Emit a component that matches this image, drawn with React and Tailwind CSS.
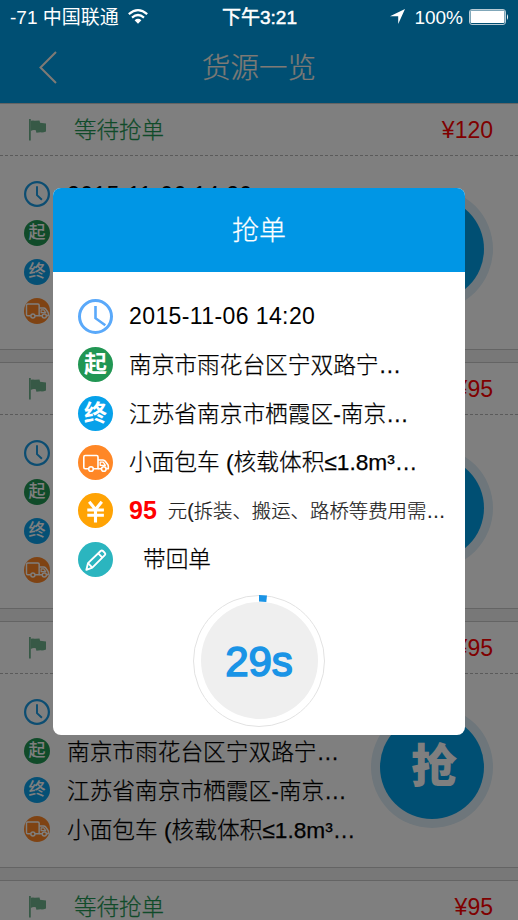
const orders = [
  { id: 1, price: 120 },
  { id: 2, price: 95 },
  { id: 3, price: 95 },
  { id: 4, price: 95 },
];

function ClockIcon({ className, long }) {
  return (
    <svg viewBox="0 0 35 35" fill="none" stroke="currentColor" className={className}>
      <circle cx="17.5" cy="17.5" r="16" strokeWidth="3" />
      <path d={long ? "M17.5 7v12.2l9.8 7" : "M17.5 7v12l6.6 6.2"} strokeWidth="2.6" />
    </svg>
  );
}

function TruckIcon({ className, large }) {
  return (
    <svg viewBox="0 0 35 35" fill="none" stroke="#fff" strokeWidth="1.6" strokeLinejoin="round" className={className}>
      <circle cx="17.5" cy="17.5" r="17.5" fill="#ff8726" stroke="none" />
      <g transform={large ? "translate(-3.6 -4.6) scale(1.2)" : undefined}>
        <path d="M10.6 23.7H7.2Q5.8 23.7 5.8 22.3V11.9Q5.8 10.5 7.2 10.5H18.6Q20 10.5 20 11.9V23.7H15.4" />
        <path d="M20 15h5q1.4 0 2.3 1.2l2.4 3.3q.6.8.6 1.7v2.5h-2M23.5 23.7H20" />
        <path d="M22.2 17.2h3l2.2 3.1h-5.2z" strokeWidth="1.3" />
        <circle cx="13" cy="24" r="2.3" />
        <circle cx="25.8" cy="24" r="2.3" />
      </g>
    </svg>
  );
}

function YuanIcon({ className }) {
  return (
    <svg viewBox="0 0 35 35" fill="none" stroke="#fff" className={className}>
      <circle cx="17.5" cy="17.5" r="17.5" fill="#ffa304" stroke="none" />
      <path d="M11.2 8.8l6.3 7.6 6.3-7.6M17.5 16v13.4M9.3 17h16.6M9.3 22.2h16.6" strokeWidth="3.1" />
    </svg>
  );
}

function PencilIcon({ className }) {
  return (
    <svg viewBox="0 0 35 35" fill="none" stroke="#fff" strokeWidth="1.9" strokeLinejoin="round" className={className}>
      <circle cx="17.5" cy="17.5" r="17.5" fill="#2bb5bf" stroke="none" />
      <path d="M8.4 27.8l1.6-6.7L22.6 9q1.2-1 2.4 0l1.8 1.8q1.1 1.2 0 2.4L14.3 25.6z" />
      <path d="M20.2 11.4l4.2 4.2M10 21.1l4.3 4.5" />
    </svg>
  );
}

function FlagIcon() {
  return (
    <svg viewBox="0 0 18 22" className="h-[22px] w-[18px] text-[#6fb38d]" fill="currentColor">
      <path d="M1 0h1.8v21.5H1z" />
      <path d="M2.8 1.8q2-.8 4 0l4.7-.3.6 2.3 5.9.6v8q-3 1.4-5.4.9l-4.2.4-.6-2.4q-2.6-.6-5 .6z" />
    </svg>
  );
}

function OrderCard({ order }) {
  return (
    <section className="mb-3 h-[247px] shrink-0 border-y border-[#c8c8c8] bg-white">
      <div className="flex h-[52px] items-center border-b border-dashed border-[#b4b4b4] pr-[25px] pl-[28px]">
        <FlagIcon />
        <span className="ml-7 flex-1 pt-[3px] text-[22.5px] font-light text-[#219653] [-webkit-text-stroke:0.25px_#219653]">等待抢单</span>
        <span className="pt-[2px] text-[23px] text-[#ff0000]">¥{order.price}</span>
      </div>
      <div className="flex justify-between pr-[25px] pl-6">
        <ul className="pt-[18px] text-[22.7px] font-light whitespace-nowrap text-black">
          <li className="flex h-[39.2px] items-center gap-[17px]">
            <ClockIcon className="size-[26px] text-[#199be4]" />
            <span className="pt-[3px] text-[23px] tracking-[0.35px]">2015-11-06 14:20</span>
          </li>
          <li className="flex h-[39.2px] items-center gap-[17px]">
            <span className="flex size-[26px] items-center justify-center rounded-full bg-[#219653] text-[17px] font-medium text-white">起</span>
            <span className="pt-[3px] [-webkit-text-stroke:0.25px_black]">南京市雨花台区宁双路宁…</span>
          </li>
          <li className="flex h-[39.2px] items-center gap-[17px]">
            <span className="flex size-[26px] items-center justify-center rounded-full bg-[#0ba0ea] text-[17px] font-medium text-white">终</span>
            <span className="pt-[3px] [-webkit-text-stroke:0.25px_black]">江苏省南京市栖霞区-南京…</span>
          </li>
          <li className="flex h-[39.2px] items-center gap-[17px]">
            <TruckIcon large className="size-[26px]" />
            <span className="pt-[3px] [-webkit-text-stroke:0.25px_black]">小面包车 (核载体积≤1.8m³…</span>
          </li>
        </ul>
        <button className="mt-[32px] -ml-10 flex size-[122px] shrink-0 items-center justify-center rounded-full bg-[#dcecf6]">
          <span className="flex size-[104px] items-center justify-center rounded-full bg-[#009ee6] pb-[2px] pl-1 text-[46px] font-black text-white">抢</span>
        </button>
      </div>
    </section>
  );
}

function StatusBar() {
  return (
    <div className="absolute inset-x-0 top-0 z-20 grid h-[33px] grid-cols-3 items-center pr-[9px] pl-[10px] text-[19px] text-white">
      <div className="flex items-center whitespace-nowrap">
        <span className="pt-px">-71 中国联通</span>
        <svg viewBox="0 0 20 15" className="ml-[9px] h-[15px] w-5" fill="none" stroke="#fff" strokeWidth="2.2">
          <path d="M.8 5.2q9.2-8 18.4 0M4 8.6q6-5.2 12 0" />
          <path d="M6.6 11.2q3.4-2.8 6.8 0L10 14.8z" fill="#fff" stroke="none" />
        </svg>
      </div>
      <span className="pt-px text-center [-webkit-text-stroke:0.5px_white]">下午3:21</span>
      <div className="flex items-center justify-end">
        <svg viewBox="0 0 15 15" className="mr-[9px] size-[15px]" fill="#fff">
          <path d="M15 0L8.2 15V7.2H0z" />
        </svg>
        <span className="pt-px">100%</span>
        <svg viewBox="0 0 40 16" className="ml-[6px] h-4 w-10" fill="#fff">
          <rect x=".5" y=".5" width="36" height="15" rx="2.5" fill="none" stroke="#b8cbd5" />
          <rect x="1.5" y="1.5" width="34" height="12.5" rx="1" />
          <path d="M38 5q2 3 0 6z" />
        </svg>
      </div>
    </div>
  );
}

function GrabDialog() {
  return (
    <div className="absolute inset-0 z-10 bg-black/50 pt-[188px] pl-[53px]">
      <div className="h-[547px] w-[412px] overflow-hidden rounded-lg bg-white">
        <h2 className="flex h-[84px] items-center justify-center bg-[#0096e5] pt-[2px] text-[27px] font-light text-white [-webkit-text-stroke:0.25px_white]">抢单</h2>
        <ul className="pt-5 pl-[25px] text-[22.7px] font-light whitespace-nowrap text-black">
          <li className="flex h-[48.6px] items-center gap-4">
            <ClockIcon long className="size-[35px] text-[#5aa9fa]" />
            <span className="text-[23px] tracking-[0.4px]">2015-11-06 14:20</span>
          </li>
          <li className="flex h-[48.6px] items-center gap-4">
            <span className="flex size-[35px] items-center justify-center rounded-full bg-[#219653] text-[23px] font-bold text-white">起</span>
            <span className="pt-px [-webkit-text-stroke:0.25px_black]">南京市雨花台区宁双路宁…</span>
          </li>
          <li className="flex h-[48.6px] items-center gap-4">
            <span className="flex size-[35px] items-center justify-center rounded-full bg-[#06a1ea] text-[23px] font-bold text-white">终</span>
            <span className="pt-px [-webkit-text-stroke:0.25px_black]">江苏省南京市栖霞区-南京…</span>
          </li>
          <li className="flex h-[48.6px] items-center gap-4">
            <TruckIcon className="size-[35px]" />
            <span className="pt-px [-webkit-text-stroke:0.25px_black]">小面包车 (核载体积≤1.8m³…</span>
          </li>
          <li className="flex h-[48.6px] items-center gap-4">
            <YuanIcon className="size-[35px]" />
            <span className="text-[25px] font-bold text-[#ff0000]">95</span>
            <span className="-ml-[5px] pt-[2px] text-[19.4px] text-[#222] [-webkit-text-stroke:0.2px_#222]">元(拆装、搬运、路桥等费用需…</span>
          </li>
          <li className="flex h-[48.6px] items-center gap-[30px]">
            <PencilIcon className="size-[35px]" />
            <span className="pt-px [-webkit-text-stroke:0.25px_black]">带回单</span>
          </li>
        </ul>
        <div className="mx-auto mt-[11px] flex size-[132px] items-center justify-center rounded-full border border-[#e2e2e2]">
          <div className="relative flex size-[117px] items-center justify-center rounded-full bg-[#efefef] pt-[3px] text-[42px] text-[#1a94e6] [-webkit-text-stroke:1.6px_#1a94e6]">
            29s
            <svg viewBox="0 0 8 7" className="absolute -top-[7px] left-[58px] h-[7px] w-2">
              <path d="M0 0l8 .5-.7 6.5L0 6.6z" fill="#1a94e6" />
            </svg>
          </div>
        </div>
      </div>
    </div>
  );
}

export default function App() {
  return (
    <div className="relative flex h-[920px] w-[518px] flex-col overflow-hidden bg-[#f0f0f0] font-['Liberation_Sans','Noto_Sans_CJK_SC',sans-serif] leading-none">
      <StatusBar />
      <header className="grid h-[103px] shrink-0 grid-cols-3 items-center bg-[#009ee6] px-[39px] pt-[31px] text-[#fff5ea]">
        <svg viewBox="0 0 18 33" className="h-[33px] w-[18px]" fill="none" stroke="currentColor" strokeWidth="2">
          <path d="M17 1L1.5 16.5 17 32" />
        </svg>
        <h1 className="pt-[2px] text-center text-[28.5px] font-light whitespace-nowrap [-webkit-text-stroke:0.2px_#fff5ea]">货源一览</h1>
      </header>
      {orders.map((order) => (
        <OrderCard key={order.id} order={order} />
      ))}
      <GrabDialog />
    </div>
  );
}
